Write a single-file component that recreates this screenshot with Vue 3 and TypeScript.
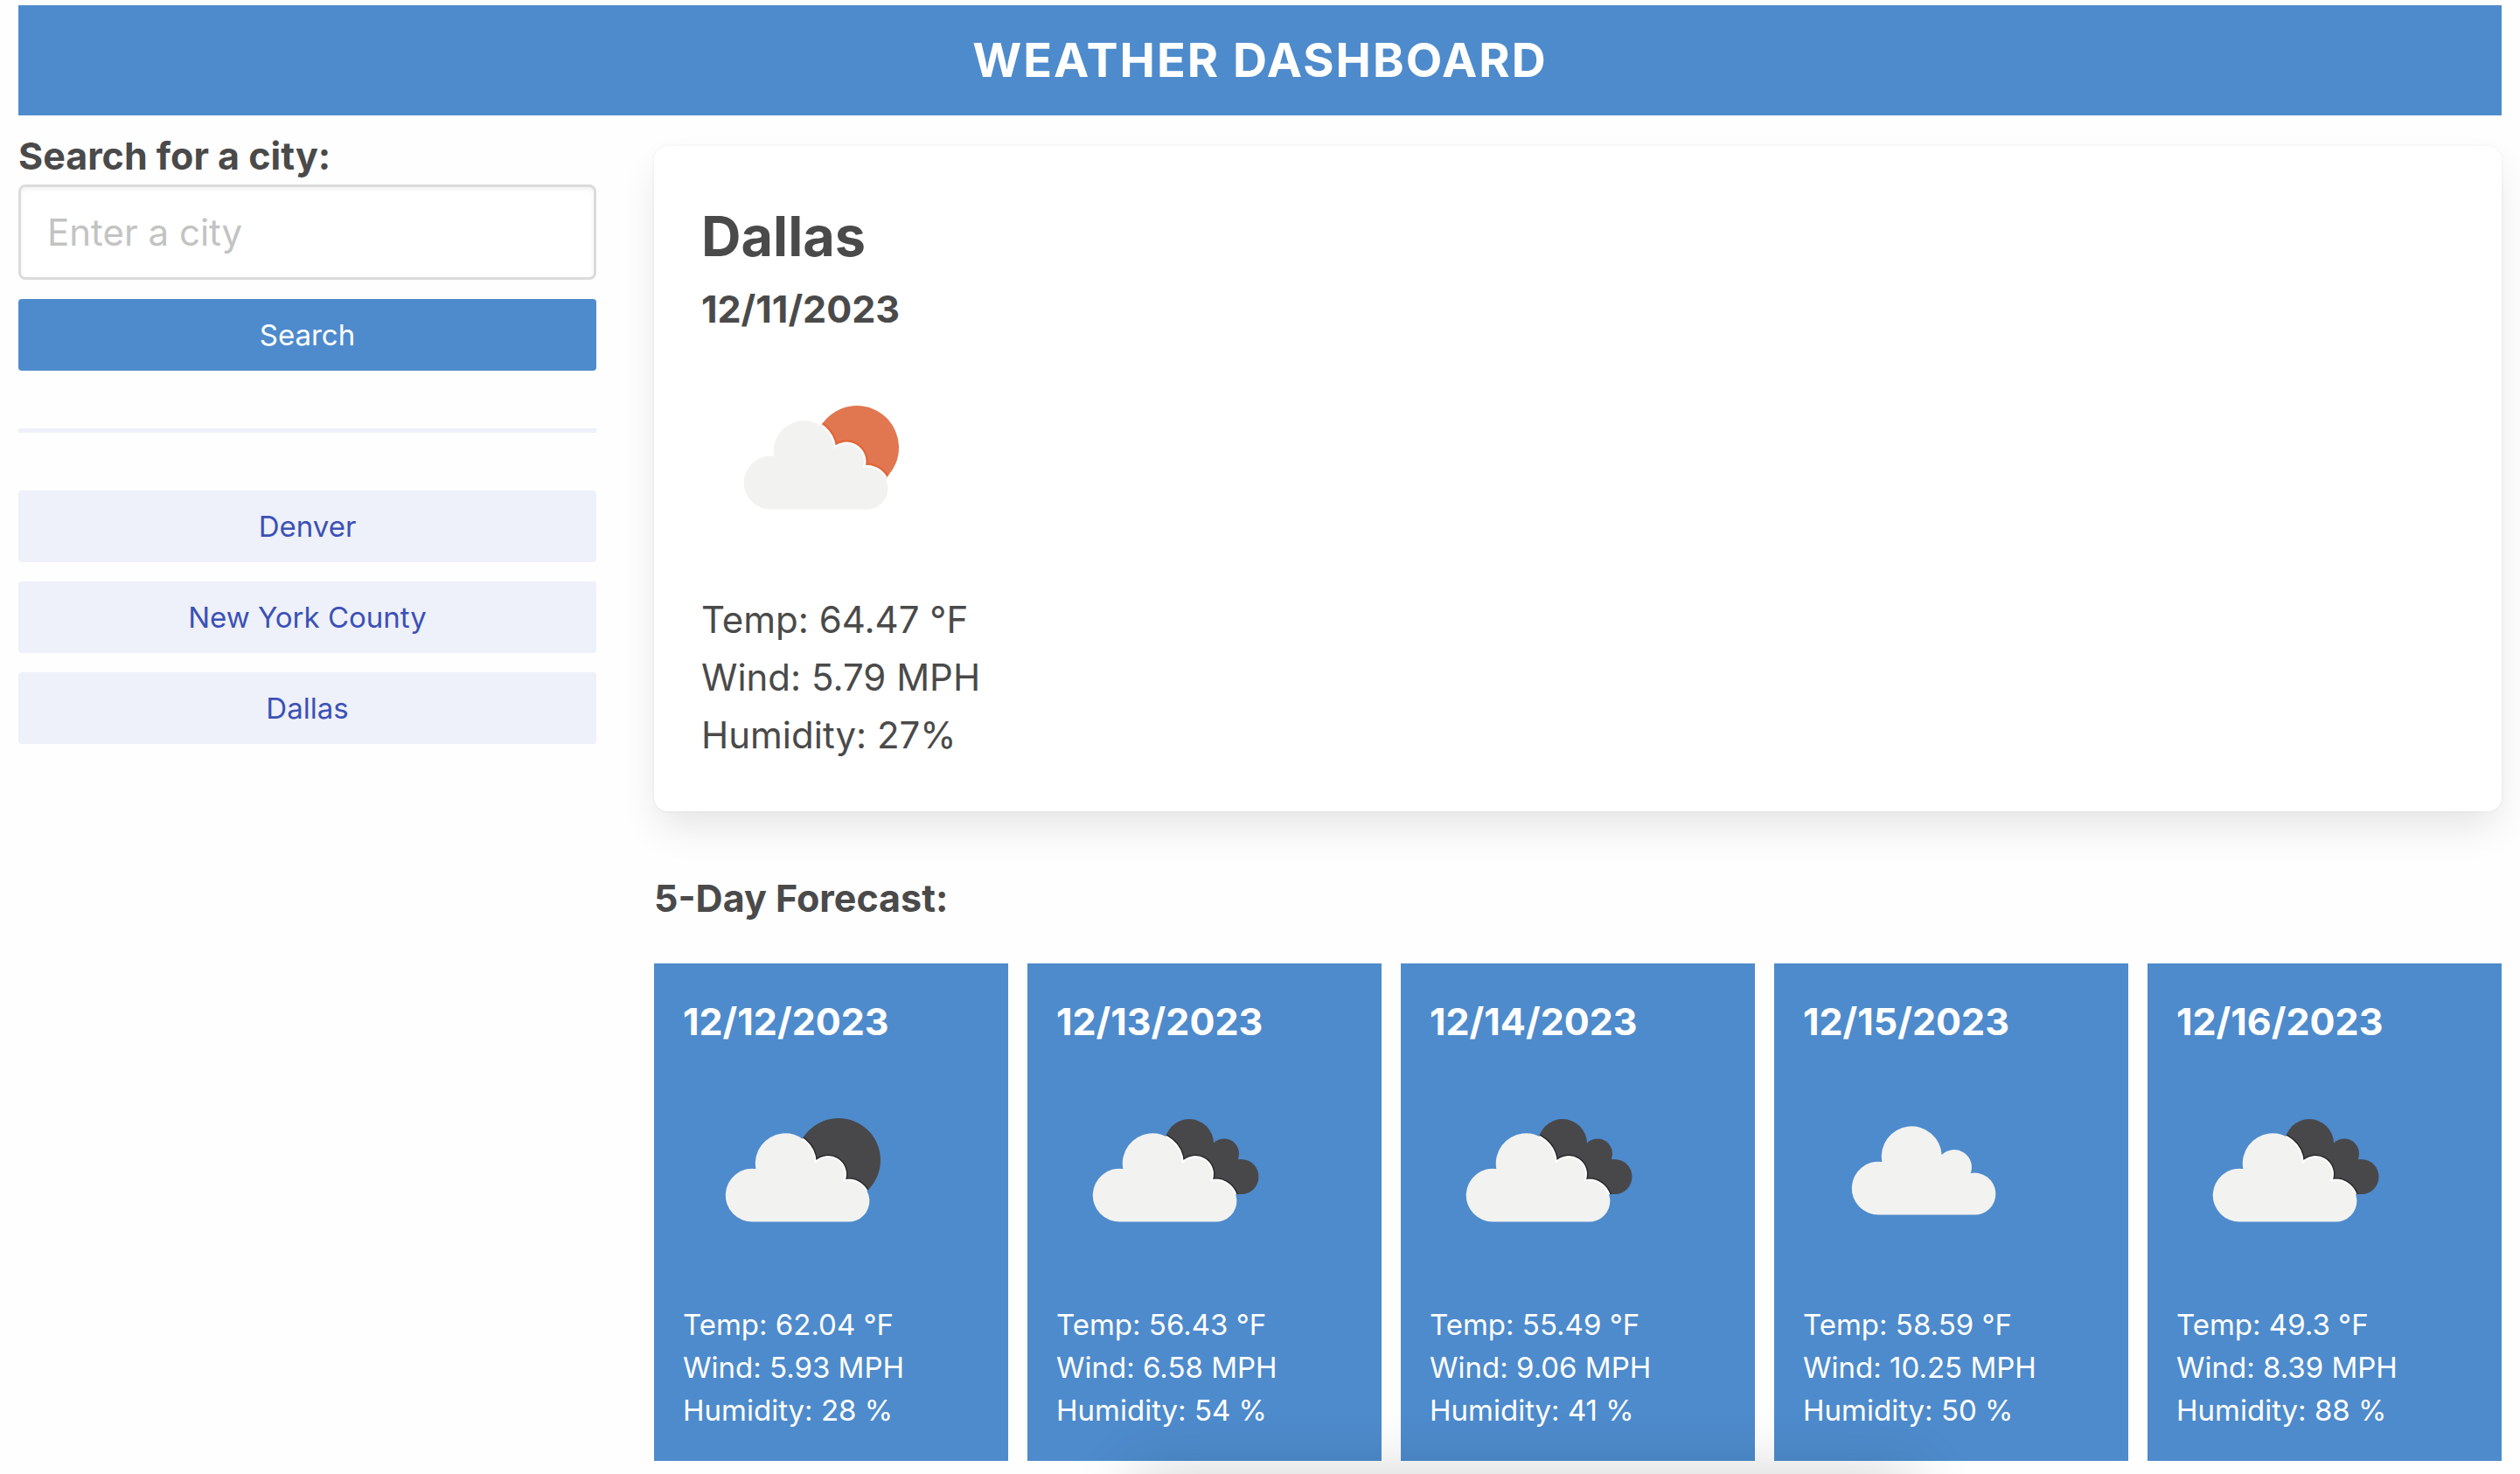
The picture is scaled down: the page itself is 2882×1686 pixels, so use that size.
<script setup lang="ts">
import { ref } from 'vue'

type Sky = 'sun' | 'moon' | 'broken' | 'cloud'

interface Day {
  date: string
  sky: Sky
  temp: string
  wind: string
  humidity: string
}

const query = ref('')
const history = ref<string[]>(['Denver', 'New York County', 'Dallas'])

const days: Day[] = [
  { date: '12/12/2023', sky: 'moon', temp: '62.04', wind: '5.93', humidity: '28' },
  { date: '12/13/2023', sky: 'broken', temp: '56.43', wind: '6.58', humidity: '54' },
  { date: '12/14/2023', sky: 'broken', temp: '55.49', wind: '9.06', humidity: '41' },
  { date: '12/15/2023', sky: 'cloud', temp: '58.59', wind: '10.25', humidity: '50' },
  { date: '12/16/2023', sky: 'broken', temp: '49.3', wind: '8.39', humidity: '88' },
]

// Outline of the light cloud shared by every icon
const cloud =
  'M80 181.500A30.400 30.400 0 1 1 83.300 121A34.500 34.500 0 1 1 151.700 113A20 20 0 0 1 184.700 134A24 24 0 1 1 188 181.500z'
</script>

<template>
  <svg width="0" height="0" class="defs" aria-hidden="true">
    <defs>
      <clipPath id="disc"><circle cx="178" cy="111" r="48" /></clipPath>
      <g id="rear-cloud">
        <circle cx="152" cy="92" r="28" />
        <circle cx="192" cy="103.500" r="17" />
        <circle cx="211.500" cy="130" r="20" />
        <path d="M140 92L180 92L209 110L212 150H170z" />
      </g>
      <clipPath id="rear-clip">
        <circle cx="152" cy="92" r="28" />
        <circle cx="192" cy="103.500" r="17" />
        <circle cx="211.500" cy="130" r="20" />
        <path d="M140 92L180 92L209 110L212 150H170z" />
      </clipPath>
    </defs>
  </svg>

  <div class="page">
    <header class="banner">
      <h1>WEATHER DASHBOARD</h1>
    </header>

    <div class="columns">
      <aside class="sidebar">
        <form @submit.prevent>
          <label for="city">Search for a city:</label>
          <input id="city" v-model="query" type="text" placeholder="Enter a city" />
          <button type="submit" class="btn primary">Search</button>
        </form>
        <hr />
        <div class="history">
          <button v-for="c in history" :key="c" type="button" class="btn light">{{ c }}</button>
        </div>
      </aside>

      <main class="content">
        <section class="today">
          <h2>Dallas</h2>
          <h3>12/11/2023</h3>
          <svg class="icon" viewBox="0 0 262 262" role="img" aria-label="Few clouds">
            <circle cx="178" cy="111" r="48" fill="#e17751" />
            <g clip-path="url(#disc)" fill="none">
              <path :d="cloud" stroke="#e2663a" stroke-width="10" />
              <path :d="cloud" stroke="#f6feff" stroke-width="5" />
            </g>
            <path :d="cloud" fill="#f2f2f0" />
          </svg>
          <p>Temp: 64.47 °F</p>
          <p>Wind: 5.79 MPH</p>
          <p>Humidity: 27%</p>
        </section>

        <h3 class="heading">5-Day Forecast:</h3>

        <section class="forecast">
          <article v-for="d in days" :key="d.date" class="day">
            <h3>{{ d.date }}</h3>
            <svg class="icon" viewBox="0 0 262 262" role="img" :aria-label="d.sky">
              <template v-if="d.sky === 'moon'">
                <circle cx="178" cy="111" r="48" fill="#48484a" />
                <g clip-path="url(#disc)" fill="none">
                  <path :d="cloud" stroke="#2b2b2d" stroke-width="5" />
                </g>
                <path :d="cloud" fill="#f2f2f0" />
                <g clip-path="url(#disc)" fill="none">
                  <path :d="cloud" stroke="#ffffff" stroke-width="2" />
                </g>
              </template>
              <template v-else-if="d.sky === 'broken'">
                <use href="#rear-cloud" fill="#48484a" />
                <g clip-path="url(#rear-clip)">
                  <path :d="cloud" transform="translate(-7 0)" fill="none" stroke="#2b2b2d" stroke-width="5" />
                </g>
                <path :d="cloud" transform="translate(-7 0)" fill="#f2f2f0" />
                <g clip-path="url(#rear-clip)">
                  <path :d="cloud" transform="translate(-7 0)" fill="none" stroke="#ffffff" stroke-width="2" />
                </g>
              </template>
              <path v-else :d="cloud" transform="translate(7 -8)" fill="#f2f2f0" />
            </svg>
            <p>Temp: {{ d.temp }} °F</p>
            <p>Wind: {{ d.wind }} MPH</p>
            <p>Humidity: {{ d.humidity }} %</p>
          </article>
        </section>
      </main>
    </div>
    <div class="edge-shadow"></div>
  </div>
</template>

<style>
body {
  background: #fefefe;
}
</style>

<style scoped>
.defs {
  position: absolute;
}
.page {
  padding: 6px 21px 14px;
  color: #4a4a4a;
  font-family: Inter, 'Liberation Sans', sans-serif;
  font-size: 42px;
  line-height: 66px;
}
h1,
h2,
h3,
p {
  margin: 0;
}
.banner {
  padding: 30px;
  background: #4e8bcc;
  color: #fff;
  text-align: center;
}
.banner h1 {
  font-size: 54px;
  font-weight: 700;
  line-height: 66px;
  letter-spacing: 2px;
}
.columns {
  display: flex;
  align-items: flex-start;
  gap: 66px;
}
.sidebar {
  flex: none;
  width: calc(25% - 49px);
  padding-top: 13px;
}
.sidebar form,
.history {
  display: flex;
  flex-direction: column;
}
.history {
  gap: 22px;
}
label,
h3 {
  font-size: 43px;
  font-weight: 700;
  line-height: 66px;
}
input {
  box-sizing: border-box;
  height: 109px;
  margin: 0 0 22px;
  padding: 0 30px;
  border: 3px solid #dbdbdb;
  border-radius: 8px;
  background: #fff;
  box-shadow: inset 0 3px 5px rgba(10, 10, 10, 0.05);
  color: #363636;
  font: inherit;
}
input::placeholder {
  color: #c3c3c3;
  opacity: 1;
}
.btn {
  height: 82px;
  padding: 0 32px;
  border: 0;
  border-radius: 4px;
  font-family: inherit;
  font-size: 33px;
}
.primary {
  background: #4e8bcc;
  color: #fff;
}
.light {
  background: #eef0fa;
  color: #3b51b5;
}
hr {
  height: 5px;
  margin: 66px 0;
  border: 0;
  background: #eef0fa;
}
.content {
  flex: 1;
  min-width: 0;
  padding-top: 35px;
}
.today {
  padding: 54px;
  border-radius: 16px;
  background: #fff;
  box-shadow: 0 22px 44px -5px rgba(10, 10, 10, 0.1), 0 0 0 2px rgba(10, 10, 10, 0.02);
}
.today h2 {
  font-size: 63px;
  font-weight: 700;
  line-height: 99px;
}
.icon {
  display: block;
  width: 262px;
  height: 262px;
  margin: 15px 0 13px;
}
.heading {
  margin: 66px 0 42px;
}
.forecast {
  display: grid;
  grid-template-columns: repeat(5, 1fr);
  gap: 22px;
}
.day {
  padding: 33px;
  background: #4e8bcc;
  color: #fff;
}
.day p {
  font-size: 33px;
  line-height: 49px;
}
/* Soft shadow rising from the lower edge of the window */
.edge-shadow {
  position: fixed;
  top: 100%;
  left: 45%;
  width: 31%;
  height: 60px;
  box-shadow: 0 0 70px rgba(10, 10, 10, 0.18);
}
</style>
